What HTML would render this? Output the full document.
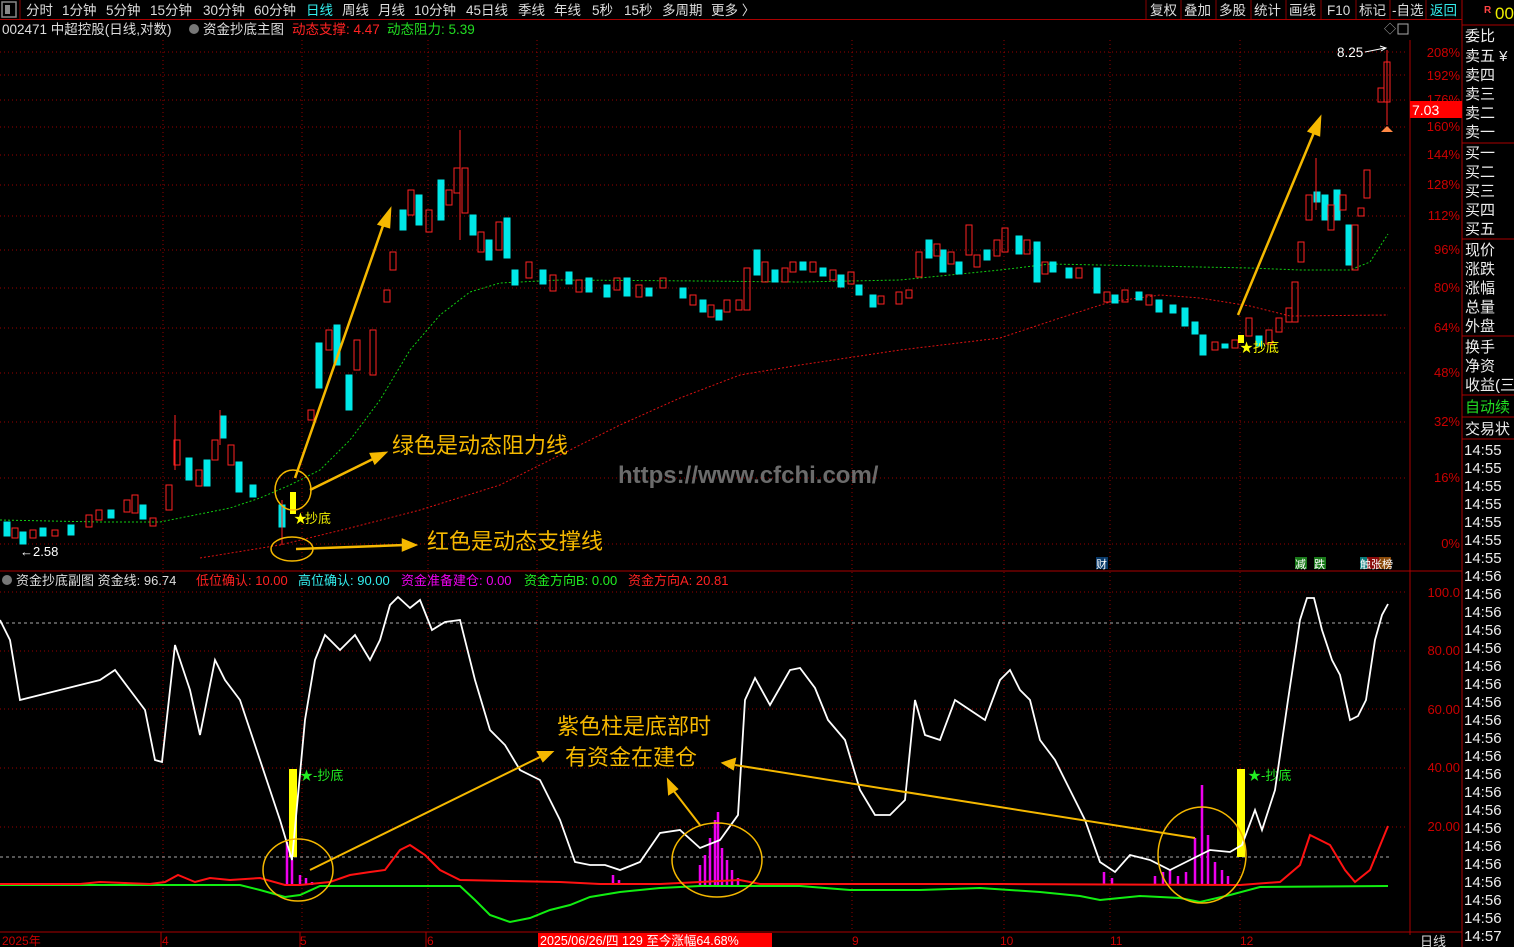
<!DOCTYPE html><html><head><meta charset="utf-8"><style>
body{margin:0;background:#000;width:1514px;height:947px;overflow:hidden;font-family:"Liberation Sans","Noto Sans CJK SC",sans-serif;}
svg{display:block}
</style></head><body>
<svg width="1514" height="947" viewBox="0 0 1514 947" xmlns="http://www.w3.org/2000/svg" font-family="Liberation Sans, Noto Sans CJK SC, sans-serif">
<rect width="1514" height="947" fill="#000"/>
<!-- top toolbar -->
<rect x="2" y="2" width="14" height="15" fill="none" stroke="#888" stroke-width="1.5"/><rect x="5" y="5" width="5" height="9" fill="#888"/>
<line x1="20" y1="0" x2="20" y2="19" stroke="#800"/>
<g font-size="13.5" fill="#ddd">
<text x="26" y="15">分时</text><text x="62" y="15">1分钟</text><text x="106" y="15">5分钟</text><text x="150" y="15">15分钟</text><text x="203" y="15">30分钟</text><text x="254" y="15">60分钟</text>
<text x="306" y="15" fill="#3ee">日线</text><text x="342" y="15">周线</text><text x="378" y="15">月线</text><text x="414" y="15">10分钟</text><text x="466" y="15">45日线</text><text x="518" y="15">季线</text><text x="554" y="15">年线</text><text x="592" y="15">5秒</text><text x="624" y="15">15秒</text><text x="662" y="15">多周期</text><text x="711" y="15">更多 〉</text>
<text x="1150" y="15">复权</text><text x="1184" y="15">叠加</text><text x="1219" y="15">多股</text><text x="1254" y="15">统计</text><text x="1289" y="15">画线</text><text x="1327" y="15">F10</text><text x="1359" y="15">标记</text><text x="1392" y="15">-自选</text><text x="1430" y="15" fill="#3ee">返回</text>
</g>
<g stroke="#800"><line x1="1146" y1="0" x2="1146" y2="19"/><line x1="1181" y1="0" x2="1181" y2="19"/><line x1="1216" y1="0" x2="1216" y2="19"/><line x1="1251" y1="0" x2="1251" y2="19"/><line x1="1286" y1="0" x2="1286" y2="19"/><line x1="1321" y1="0" x2="1321" y2="19"/><line x1="1356" y1="0" x2="1356" y2="19"/><line x1="1390" y1="0" x2="1390" y2="19"/><line x1="1426" y1="0" x2="1426" y2="19"/></g>
<line x1="0" y1="19.5" x2="1462" y2="19.5" stroke="#a00"/>
<text x="1484" y="13" font-size="10" fill="#f44" font-weight="bold">R</text><text x="1495" y="19" font-size="17" fill="#ee0">00</text>
<!-- info line -->
<g font-size="13.5"><text x="2" y="34" fill="#ddd">002471 中超控股(日线,对数)</text>
<circle cx="194" cy="29" r="5" fill="#777"/><text x="203" y="34" fill="#ddd">资金抄底主图</text>
<text x="292" y="34" fill="#f22">动态支撑: 4.47</text><text x="387" y="34" fill="#2d2">动态阻力: 5.39</text></g>
<!-- right panel -->
<line x1="1462" y1="0" x2="1462" y2="947" stroke="#a00"/>
<line x1="1410" y1="40" x2="1410" y2="935" stroke="#a00"/>
<g stroke="#a00"><line x1="1462" y1="25" x2="1514" y2="25"/><line x1="1462" y1="143" x2="1514" y2="143"/><line x1="1462" y1="239" x2="1514" y2="239"/><line x1="1462" y1="336" x2="1514" y2="336"/><line x1="1462" y1="395" x2="1514" y2="395"/><line x1="1462" y1="417" x2="1514" y2="417"/><line x1="1462" y1="439" x2="1514" y2="439"/></g>
<g font-size="15" fill="#eee">
<text x="1465" y="41">委比</text><text x="1465" y="61">卖五 ¥</text><text x="1465" y="80">卖四</text><text x="1465" y="99">卖三</text><text x="1465" y="118">卖二</text><text x="1465" y="137">卖一</text>
<text x="1465" y="158">买一</text><text x="1465" y="177">买二</text><text x="1465" y="196">买三</text><text x="1465" y="215">买四</text><text x="1465" y="234">买五</text>
<text x="1465" y="255">现价</text><text x="1465" y="274">涨跌</text><text x="1465" y="293">涨幅</text><text x="1465" y="312">总量</text><text x="1465" y="331">外盘</text>
<text x="1465" y="352">换手</text><text x="1465" y="371">净资</text><text x="1465" y="390">收益(三)</text>
<text x="1465" y="412" fill="#2d2">自动续</text><text x="1465" y="434">交易状</text>
<text x="1464" y="455">14:55</text><text x="1464" y="473">14:55</text><text x="1464" y="491">14:55</text><text x="1464" y="509">14:55</text><text x="1464" y="527">14:55</text><text x="1464" y="545">14:55</text><text x="1464" y="563">14:55</text><text x="1464" y="581">14:56</text><text x="1464" y="599">14:56</text><text x="1464" y="617">14:56</text><text x="1464" y="635">14:56</text><text x="1464" y="653">14:56</text><text x="1464" y="671">14:56</text><text x="1464" y="689">14:56</text><text x="1464" y="707">14:56</text><text x="1464" y="725">14:56</text><text x="1464" y="743">14:56</text><text x="1464" y="761">14:56</text><text x="1464" y="779">14:56</text><text x="1464" y="797">14:56</text><text x="1464" y="815">14:56</text><text x="1464" y="833">14:56</text><text x="1464" y="851">14:56</text><text x="1464" y="869">14:56</text><text x="1464" y="887">14:56</text><text x="1464" y="905">14:56</text><text x="1464" y="923">14:56</text><text x="1464" y="941">14:57</text>
</g>
<!-- main grid -->
<g stroke="#900" stroke-dasharray="1 3">
<line x1="0" y1="52" x2="1405" y2="52"/><line x1="0" y1="75" x2="1405" y2="75"/><line x1="0" y1="100" x2="1405" y2="100"/><line x1="0" y1="127" x2="1405" y2="127"/><line x1="0" y1="155" x2="1405" y2="155"/><line x1="0" y1="185" x2="1405" y2="185"/><line x1="0" y1="216" x2="1405" y2="216"/><line x1="0" y1="250" x2="1405" y2="250"/><line x1="0" y1="288" x2="1405" y2="288"/><line x1="0" y1="328" x2="1405" y2="328"/><line x1="0" y1="373" x2="1405" y2="373"/><line x1="0" y1="422" x2="1405" y2="422"/><line x1="0" y1="478" x2="1405" y2="478"/><line x1="0" y1="544" x2="1405" y2="544"/>
<line x1="163" y1="40" x2="163" y2="932"/><line x1="302" y1="40" x2="302" y2="932"/><line x1="428" y1="40" x2="428" y2="932"/><line x1="537" y1="40" x2="537" y2="932"/><line x1="852" y1="40" x2="852" y2="932"/><line x1="1004" y1="40" x2="1004" y2="932"/><line x1="1110" y1="40" x2="1110" y2="932"/><line x1="1240" y1="40" x2="1240" y2="932"/>
</g>
<g font-size="13" fill="#c00" text-anchor="end">
<text x="1460" y="57">208%</text><text x="1460" y="80">192%</text><text x="1460" y="104">176%</text><text x="1460" y="131">160%</text><text x="1460" y="159">144%</text><text x="1460" y="189">128%</text><text x="1460" y="220">112%</text><text x="1460" y="254">96%</text><text x="1460" y="292">80%</text><text x="1460" y="332">64%</text><text x="1460" y="377">48%</text><text x="1460" y="426">32%</text><text x="1460" y="482">16%</text><text x="1460" y="548">0%</text>
</g>
<rect x="1410" y="101" width="52" height="17" fill="#f00"/><text x="1412" y="115" font-size="14" fill="#fff">7.03</text>
<text x="1384" y="33" font-size="12" fill="#aaa">◇</text><rect x="1398" y="24" width="10" height="10" fill="none" stroke="#aaa"/>
<text x="1337" y="57" font-size="13.5" fill="#fff">8.25</text><path d="M1365 52 L1385 48 M1380 46 L1386 48 L1381 51" stroke="#fff" fill="none"/>
<!-- dynamic lines -->
<polyline fill="none" stroke="#1c1" stroke-dasharray="2 2" points="0,520 100,522 160,522 230,508 260,498 290,485 320,470 350,440 380,400 410,350 440,315 470,292 500,283 560,280 700,281 800,282 900,280 1000,270 1050,264 1150,266 1250,268 1300,270 1350,270 1370,262 1388,234"/>
<polyline fill="none" stroke="#d11" stroke-dasharray="2 2" points="200,558 280,545 350,528 420,510 500,485 560,455 620,425 680,398 740,375 800,365 900,350 1000,338 1060,318 1110,302 1160,295 1200,298 1250,306 1290,316 1388,315"/>
<!-- candles -->
<g id="c" stroke-width="1">
<g fill="#00e8e8" stroke="#00e8e8">
<rect x="4" y="522" width="6" height="14"/><rect x="20" y="532" width="6" height="12"/><rect x="40" y="528" width="6" height="8"/><rect x="68" y="525" width="6" height="10"/><rect x="108" y="510" width="6" height="8"/><rect x="140" y="505" width="6" height="14"/>
<rect x="186" y="458" width="6" height="22"/><rect x="204" y="460" width="6" height="26"/><rect x="220" y="416" width="6" height="22"/><rect x="236" y="462" width="6" height="30"/><rect x="250" y="485" width="6" height="12"/><rect x="279" y="505" width="6" height="22"/>
<rect x="316" y="343" width="6" height="45"/><rect x="334" y="325" width="6" height="40"/><rect x="346" y="375" width="6" height="35"/>
<rect x="400" y="210" width="6" height="20"/><rect x="416" y="195" width="6" height="30"/><rect x="438" y="180" width="6" height="40"/><rect x="470" y="215" width="6" height="20"/><rect x="486" y="240" width="6" height="20"/><rect x="504" y="218" width="6" height="40"/>
<rect x="512" y="270" width="6" height="15"/><rect x="540" y="270" width="6" height="14"/><rect x="566" y="272" width="6" height="12"/><rect x="586" y="278" width="6" height="14"/><rect x="604" y="285" width="6" height="12"/><rect x="624" y="278" width="6" height="18"/><rect x="646" y="288" width="6" height="8"/><rect x="680" y="288" width="6" height="10"/><rect x="700" y="300" width="6" height="12"/><rect x="716" y="310" width="6" height="10"/>
<rect x="754" y="250" width="6" height="25"/><rect x="772" y="270" width="6" height="12"/><rect x="800" y="262" width="6" height="8"/><rect x="820" y="268" width="6" height="8"/><rect x="838" y="275" width="6" height="12"/><rect x="856" y="285" width="6" height="10"/><rect x="870" y="295" width="6" height="12"/>
<rect x="926" y="240" width="6" height="18"/><rect x="940" y="250" width="6" height="22"/><rect x="956" y="262" width="6" height="12"/><rect x="984" y="250" width="6" height="10"/><rect x="1016" y="236" width="6" height="18"/><rect x="1034" y="242" width="6" height="40"/><rect x="1050" y="262" width="6" height="10"/><rect x="1066" y="268" width="6" height="10"/><rect x="1094" y="268" width="6" height="25"/><rect x="1112" y="295" width="6" height="8"/><rect x="1136" y="292" width="6" height="8"/><rect x="1156" y="300" width="6" height="12"/><rect x="1170" y="305" width="6" height="8"/><rect x="1182" y="308" width="6" height="18"/><rect x="1192" y="322" width="6" height="12"/><rect x="1200" y="335" width="6" height="20"/><rect x="1222" y="344" width="6" height="4"/><rect x="1256" y="336" width="6" height="10"/>
<rect x="1314" y="192" width="6" height="10"/><rect x="1322" y="195" width="6" height="25"/><rect x="1334" y="190" width="6" height="30"/><rect x="1346" y="225" width="6" height="40"/>
</g>
<g fill="none" stroke="#f22">
<rect x="12" y="528" width="6" height="10"/><rect x="30" y="530" width="6" height="8"/><rect x="52" y="530" width="6" height="6"/><rect x="86" y="515" width="6" height="12"/><rect x="96" y="510" width="6" height="10"/><rect x="124" y="500" width="6" height="12"/><rect x="132" y="495" width="6" height="18"/><rect x="150" y="518" width="6" height="8"/>
<rect x="166" y="485" width="6" height="25"/><rect x="174" y="440" width="6" height="25"/><rect x="196" y="470" width="6" height="16"/><rect x="212" y="440" width="6" height="20"/><rect x="228" y="445" width="6" height="20"/>
<rect x="308" y="410" width="6" height="10"/><rect x="326" y="330" width="6" height="20"/><rect x="354" y="340" width="6" height="30"/><rect x="370" y="330" width="6" height="45"/><rect x="384" y="290" width="6" height="12"/><rect x="390" y="252" width="6" height="18"/>
<rect x="408" y="190" width="6" height="25"/><rect x="426" y="210" width="6" height="22"/><rect x="446" y="190" width="6" height="15"/><rect x="454" y="168" width="6" height="25"/><rect x="462" y="168" width="6" height="45"/><rect x="478" y="232" width="6" height="20"/><rect x="496" y="222" width="6" height="28"/>
<rect x="526" y="262" width="6" height="16"/><rect x="550" y="275" width="6" height="16"/><rect x="576" y="280" width="6" height="12"/><rect x="614" y="278" width="6" height="12"/><rect x="636" y="285" width="6" height="12"/><rect x="660" y="278" width="6" height="10"/><rect x="690" y="295" width="6" height="10"/><rect x="708" y="305" width="6" height="12"/><rect x="724" y="300" width="6" height="12"/><rect x="736" y="300" width="6" height="10"/><rect x="744" y="268" width="6" height="42"/>
<rect x="762" y="262" width="6" height="20"/><rect x="782" y="268" width="6" height="14"/><rect x="790" y="262" width="6" height="10"/><rect x="810" y="262" width="6" height="10"/><rect x="830" y="270" width="6" height="10"/><rect x="848" y="272" width="6" height="12"/><rect x="878" y="296" width="6" height="8"/><rect x="896" y="292" width="6" height="12"/><rect x="906" y="290" width="6" height="8"/>
<rect x="916" y="252" width="6" height="25"/><rect x="934" y="244" width="6" height="12"/><rect x="948" y="252" width="6" height="12"/><rect x="966" y="225" width="6" height="30"/><rect x="974" y="255" width="6" height="12"/><rect x="994" y="240" width="6" height="16"/><rect x="1002" y="228" width="6" height="24"/><rect x="1024" y="240" width="6" height="14"/><rect x="1042" y="262" width="6" height="12"/><rect x="1076" y="268" width="6" height="10"/><rect x="1104" y="292" width="6" height="10"/><rect x="1122" y="290" width="6" height="12"/><rect x="1146" y="295" width="6" height="10"/>
<rect x="1212" y="342" width="6" height="8"/><rect x="1232" y="340" width="6" height="8"/><rect x="1246" y="318" width="6" height="18"/><rect x="1266" y="330" width="6" height="14"/><rect x="1276" y="318" width="6" height="14"/><rect x="1286" y="308" width="6" height="14"/><rect x="1292" y="282" width="6" height="40"/><rect x="1298" y="242" width="6" height="20"/>
<rect x="1306" y="195" width="6" height="25"/><rect x="1328" y="205" width="6" height="25"/><rect x="1340" y="195" width="6" height="15"/><rect x="1352" y="225" width="6" height="45"/><rect x="1358" y="208" width="6" height="8"/><rect x="1364" y="170" width="6" height="28"/><rect x="1378" y="88" width="6" height="14"/><rect x="1384" y="62" width="6" height="40"/>
</g>
<path d="M460 130 V240 M1387 50 V125 M1316 158 V210 M220 410 V445 M175 415 V470 M282 500 V545" stroke="#f22"/>
</g>
<path d="M1381 132 l6 -6 l6 6 z" fill="#f84"/>
<text x="294" y="523" font-size="13" fill="#ff0">★</text><text x="305" y="523" font-size="13" fill="#ee0">抄底</text>
<text x="1240" y="352" font-size="13" fill="#ff0">★抄底</text>
<rect x="290" y="492" width="6" height="22" fill="#ff0"/><rect x="1238" y="335" width="6" height="8" fill="#ff0"/>
<text x="20" y="556" font-size="13" fill="#fff">←2.58</text>
<!-- annotations main -->
<g stroke="#f5b800" stroke-width="2.5" fill="#f5b800">
<line x1="295" y1="478" x2="385" y2="220"/><path d="M390 210 l-11 14 l10 3z"/>
<line x1="310" y1="490" x2="375" y2="458"/><path d="M385 453 l-14 1 l4 9z"/>
<line x1="296" y1="549" x2="405" y2="545"/><path d="M415 545 l-12 -5 l0 10z"/>
<line x1="1238" y1="315" x2="1315" y2="130"/><path d="M1320 118 l-11 13 l10 4z"/>
</g>
<g fill="none" stroke="#f5b800" stroke-width="1.5"><ellipse cx="293" cy="490" rx="18" ry="20"/><ellipse cx="292" cy="549" rx="21" ry="12"/></g>
<g font-size="22" fill="#f5b800"><text x="392" y="453">绿色是动态阻力线</text><text x="427" y="549">红色是动态支撑线</text></g>
<text x="618" y="483" font-size="24" fill="#777" font-weight="bold" opacity="0.9">https://www.cfchi.com/</text>
<g font-size="11" fill="#fff"><rect x="1096" y="557" width="12" height="12" fill="#0a3a6a"/><text x="1096" y="568">财</text><rect x="1295" y="557" width="12" height="12" fill="#1a7a1a"/><text x="1295" y="568">减</text><rect x="1314" y="557" width="12" height="12" fill="#1a7a1a"/><text x="1314" y="568">跌</text><rect x="1360" y="557" width="12" height="12" fill="#0a7a7a"/><rect x="1367" y="557" width="12" height="12" fill="#8a0a0a"/><rect x="1379" y="557" width="12" height="12" fill="#8a4a0a"/><text x="1360" y="568">触张榜</text></g>
<!-- divider -->
<line x1="0" y1="571" x2="1462" y2="571" stroke="#a00"/>
<g font-size="13"><circle cx="7" cy="580" r="5" fill="#777"/><text x="16" y="585" fill="#ddd">资金抄底副图 资金线: 96.74</text><text x="196" y="585" fill="#f22">低位确认: 10.00</text><text x="298" y="585" fill="#3ee">高位确认: 90.00</text><text x="401" y="585" fill="#e0e">资金准备建仓: 0.00</text><text x="524" y="585" fill="#2e2">资金方向B: 0.00</text><text x="628" y="585" fill="#f22">资金方向A: 20.81</text></g>
<!-- sub grid -->
<g stroke="#900" stroke-dasharray="1 3"><line x1="0" y1="592" x2="1405" y2="592"/><line x1="0" y1="651" x2="1405" y2="651"/><line x1="0" y1="709" x2="1405" y2="709"/><line x1="0" y1="768" x2="1405" y2="768"/><line x1="0" y1="827" x2="1405" y2="827"/></g>
<line x1="0" y1="623" x2="1390" y2="623" stroke="#aaa" stroke-dasharray="3 3"/>
<line x1="0" y1="857" x2="1390" y2="857" stroke="#aaa" stroke-dasharray="3 3"/>
<g font-size="13" fill="#c00" text-anchor="end"><text x="1460" y="597">100.0</text><text x="1460" y="655">80.00</text><text x="1460" y="714">60.00</text><text x="1460" y="772">40.00</text><text x="1460" y="831">20.00</text></g>
<!-- magenta bars -->
<g stroke="#e0e" stroke-width="2.5">
<path d="M287 885 V842 M292 885 V860 M300 885 V875 M306 885 V878 M312 885 V882 M613 885 V875 M619 885 V880 M700 885 V865 M705 885 V855 M710 885 V838 M715 885 V820 M718 885 V812 M722 885 V848 M727 885 V860 M732 885 V870 M738 885 V878 M1104 885 V872 M1112 885 V878 M1155 885 V876 M1163 885 V872 M1170 885 V870 M1178 885 V876 M1186 885 V872 M1195 885 V838 M1202 885 V785 M1208 885 V835 M1215 885 V862 M1222 885 V870 M1228 885 V876"/>
</g>
<rect x="289" y="769" width="8" height="88" fill="#ff0"/><rect x="1237" y="769" width="8" height="88" fill="#ff0"/>
<text x="300" y="780" font-size="13" fill="#2e2">★-抄底</text><text x="1248" y="780" font-size="13" fill="#2e2">★-抄底</text>
<!-- green & red lines -->
<polyline fill="none" stroke="#1e1" stroke-width="2" points="0,885 240,885 260,890 285,897 300,895 320,886 460,886 475,900 490,915 510,922 530,918 550,910 570,905 590,897 620,892 660,888 700,886 800,886 850,890 920,890 980,888 1040,892 1080,896 1100,900 1140,896 1180,898 1200,902 1230,895 1260,887 1388,886"/>
<polyline fill="none" stroke="#f11" stroke-width="2" points="0,884 80,884 100,882 150,884 165,882 178,875 195,882 210,878 230,880 260,878 285,885 300,885 330,882 350,875 370,872 385,870 400,850 410,845 425,855 440,870 460,880 560,882 600,884 660,884 740,880 760,884 1000,884 1240,885 1280,882 1300,865 1310,835 1330,845 1345,870 1355,882 1370,870 1388,826"/>
<polyline fill="none" stroke="#fff" stroke-width="1.8" points="0,620 10,640 20,700 40,695 60,690 80,685 100,680 115,670 130,690 145,710 155,760 162,762 175,645 190,690 200,735 215,660 225,680 240,700 260,760 280,820 292,860 305,720 315,660 325,635 340,650 355,635 370,660 380,640 390,605 398,597 410,608 420,600 432,630 445,622 460,620 475,680 490,730 505,745 520,770 540,780 560,820 575,862 590,865 605,865 620,870 640,862 660,833 680,830 700,848 720,840 738,815 745,700 755,678 770,705 790,670 800,668 815,688 828,720 845,740 860,790 875,815 890,815 905,800 915,700 925,735 940,740 955,700 970,710 985,720 1000,680 1010,670 1020,690 1030,700 1040,740 1055,760 1070,790 1085,820 1100,862 1115,872 1130,855 1150,860 1170,870 1190,860 1210,850 1230,852 1242,845 1255,810 1262,830 1275,790 1288,700 1300,620 1307,598 1314,598 1322,630 1332,660 1340,675 1350,720 1358,716 1366,700 1375,640 1382,615 1388,604"/>
<!-- sub annotations -->
<g stroke="#f5b800" stroke-width="2" fill="#f5b800">
<line x1="310" y1="870" x2="540" y2="757"/><path d="M552 752 l-14 0 l5 9z"/>
<line x1="700" y1="825" x2="673" y2="790"/><path d="M668 780 l1 14 l8 -5z"/>
<line x1="1195" y1="838" x2="735" y2="765"/><path d="M723 763 l12 -4 l-2 10z"/>
</g>
<g fill="none" stroke="#f5b800" stroke-width="1.5"><ellipse cx="298" cy="870" rx="35" ry="31"/><ellipse cx="717" cy="860" rx="45" ry="37"/><ellipse cx="1202" cy="855" rx="44" ry="48"/></g>
<g font-size="22" fill="#f5b800"><text x="557" y="734">紫色柱是底部时</text><text x="565" y="765">有资金在建仓</text></g>
<!-- bottom axis -->
<line x1="0" y1="932" x2="1462" y2="932" stroke="#a00"/>
<g font-size="12" fill="#c00"><text x="2" y="945">2025年</text><text x="162" y="945">4</text><text x="300" y="945">5</text><text x="427" y="945">6</text><text x="852" y="945">9</text><text x="1000" y="945">10</text><text x="1110" y="945">11</text><text x="1240" y="945">12</text></g>
<g stroke="#a00"><line x1="161" y1="932" x2="161" y2="947"/><line x1="300" y1="932" x2="300" y2="947"/><line x1="426" y1="932" x2="426" y2="947"/></g>
<rect x="538" y="933" width="234" height="14" fill="#f00"/><text x="540" y="945" font-size="12.5" fill="#fff">2025/06/26/四 129 至今涨幅64.68%</text>
<text x="1420" y="946" font-size="13" fill="#ddd">日线</text>
</svg>
</body></html>
